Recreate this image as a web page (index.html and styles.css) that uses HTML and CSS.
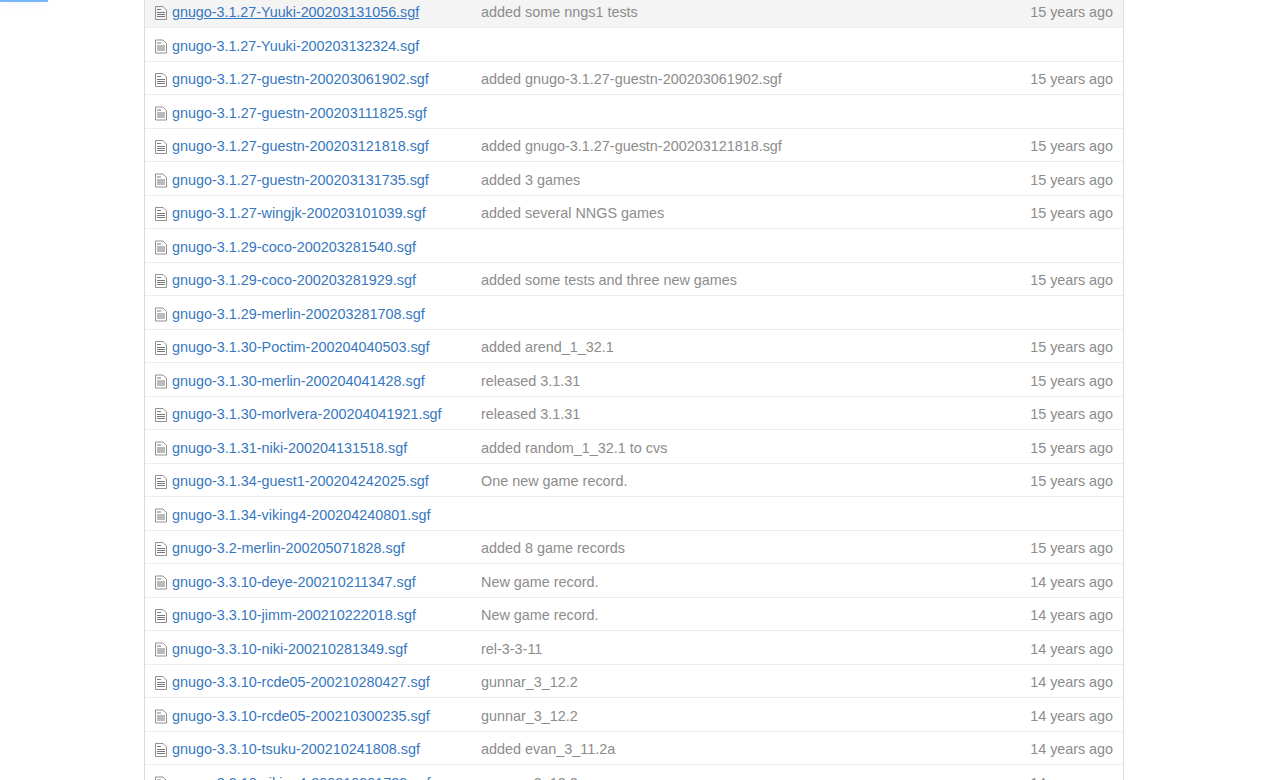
FILE: index.html
```html
<!DOCTYPE html>
<html lang="en">
<head>
<meta charset="utf-8">
<title>Files</title>
<link rel="stylesheet" href="styles.css">
</head>
<body>
<div class="progress"></div>
<main class="tree" id="tree"></main>
<script src="tree.js"></script>
</body>
</html>
```
FILE: styles.css
```css
body {
  margin: 0;
  height: 780px;
  overflow: hidden;
  background: #fff;
  font-family: "Liberation Sans", Arial, sans-serif;
  font-size: 14.4px;
  line-height: 20px;
  color: #8c8c8c;
}
.progress {
  position: absolute;
  top: 0;
  left: 0;
  width: 48px;
  height: 2px;
  background: #77b6ff;
  box-shadow: 0 0 10px rgba(119, 182, 255, 0.3);
}
.tree {
  box-sizing: border-box;
  width: 980px;
  height: 780px;
  margin-left: 144px;
  overflow: hidden;
  border: solid #dcdcdc;
  border-width: 0 1px;
}
.row {
  box-sizing: border-box;
  display: grid;
  grid-template-columns: 326px 1fr auto;
  height: 33.5px;
  padding: 7.5px 10px 0 10px;
  border-bottom: 1px solid #eee;
  white-space: nowrap;
}
.row:first-child {
  margin-top: -5.5px;
  background: #f4f4f4;
}
.row:nth-child(-n+2) a {
  letter-spacing: -0.05px;
}
.name {
  display: flex;
  color: #3777bf;
}
.icon {
  flex: none;
  width: 12px;
  height: 16px;
  margin: 3px 5px 0 0;
  fill: none;
  stroke: #777;
}
.row:first-child a {
  text-decoration: underline;
}
.row a {
  color: inherit;
  text-decoration: none;
}
.row:first-child a {
  text-decoration: underline;
}
.age {
  letter-spacing: -0.04px;
}
```
FILE: tree.js
```javascript
// [file name, last commit message, years since the commit]
const files = [
  ["gnugo-3.1.27-Yuuki-200203131056.sgf", "added some nngs1 tests", 15],
  ["gnugo-3.1.27-Yuuki-200203132324.sgf", "", 0],
  ["gnugo-3.1.27-guestn-200203061902.sgf", "added gnugo-3.1.27-guestn-200203061902.sgf", 15],
  ["gnugo-3.1.27-guestn-200203111825.sgf", "", 0],
  ["gnugo-3.1.27-guestn-200203121818.sgf", "added gnugo-3.1.27-guestn-200203121818.sgf", 15],
  ["gnugo-3.1.27-guestn-200203131735.sgf", "added 3 games", 15],
  ["gnugo-3.1.27-wingjk-200203101039.sgf", "added several NNGS games", 15],
  ["gnugo-3.1.29-coco-200203281540.sgf", "", 0],
  ["gnugo-3.1.29-coco-200203281929.sgf", "added some tests and three new games", 15],
  ["gnugo-3.1.29-merlin-200203281708.sgf", "", 0],
  ["gnugo-3.1.30-Poctim-200204040503.sgf", "added arend_1_32.1", 15],
  ["gnugo-3.1.30-merlin-200204041428.sgf", "released 3.1.31", 15],
  ["gnugo-3.1.30-morlvera-200204041921.sgf", "released 3.1.31", 15],
  ["gnugo-3.1.31-niki-200204131518.sgf", "added random_1_32.1 to cvs", 15],
  ["gnugo-3.1.34-guest1-200204242025.sgf", "One new game record.", 15],
  ["gnugo-3.1.34-viking4-200204240801.sgf", "", 0],
  ["gnugo-3.2-merlin-200205071828.sgf", "added 8 game records", 15],
  ["gnugo-3.3.10-deye-200210211347.sgf", "New game record.", 14],
  ["gnugo-3.3.10-jimm-200210222018.sgf", "New game record.", 14],
  ["gnugo-3.3.10-niki-200210281349.sgf", "rel-3-3-11", 14],
  ["gnugo-3.3.10-rcde05-200210280427.sgf", "gunnar_3_12.2", 14],
  ["gnugo-3.3.10-rcde05-200210300235.sgf", "gunnar_3_12.2", 14],
  ["gnugo-3.3.10-tsuku-200210241808.sgf", "added evan_3_11.2a", 14],
  ["gnugo-3.3.10-viking4-200210301723.sgf", "gunnar_3_12.2", 14]
];

// Rows are 33.5px tall, so every second icon sits on a half pixel.
const icon = (i) => `<svg class="icon" viewBox="0 0 12 16"><g transform="translate(0 ${i % 2 ? 0.5 : 1})"><path d="M.5 .5H8L11.5 4V13.5H.5Z" stroke-opacity=".8"/><path d="M2 3.5H6M2 6.5H10M2 8.5H10M2 10.5H10"/></g></svg>`;

document.getElementById("tree").innerHTML = files.map(([name, message, years], i) =>
  `<div class="row"><div class="name">${icon(i)}<a>${name}</a></div><div class="message">${message}</div><div class="age">${years ? years + " years ago" : ""}</div></div>`
).join("");
```
